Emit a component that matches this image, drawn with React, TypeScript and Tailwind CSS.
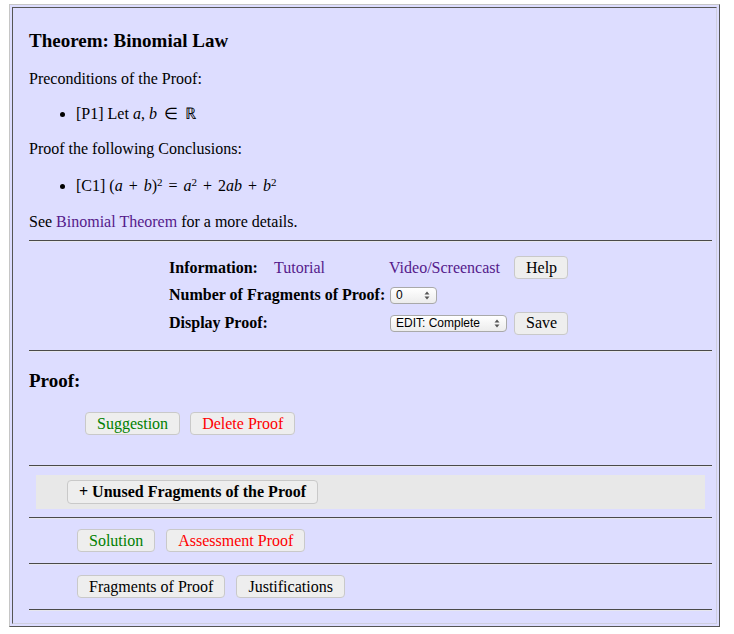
import React from "react";

const serif = "font-['Liberation_Serif',serif]";

function Btn({ children, className = "" }: { children: React.ReactNode; className?: string }) {
  return (
    <button
      className={`h-[23px] px-[11px] rounded-[4px] border border-[#c9c9c9] bg-[#eeeeee] text-[16px] leading-[20px] ${className}`}
    >
      {children}
    </button>
  );
}

function Select({ label, width }: { label: string; width: string }) {
  return (
    <div
      className={`${width} h-[17px] flex items-center justify-between pl-[5px] pr-[6px] rounded-[4px] border border-[#a9a9a9] bg-gradient-to-b from-white to-[#ececec] font-['Liberation_Sans',sans-serif] text-[12px] text-black`}
    >
      <span>{label}</span>
      <svg width="6" height="9" viewBox="0 0 6 9">
        <path d="M3 0.5 L5.5 3.5 H0.5 Z" fill="#555" />
        <path d="M3 8.5 L5.5 5.5 H0.5 Z" fill="#555" />
      </svg>
    </div>
  );
}

function Rule() {
  return <div className="h-[2px] border-t border-[#4a4a4a] border-b border-b-[#e6e6ee]" />;
}

export default function App() {
  return (
    <div className={`min-h-screen bg-white pt-[4px] pl-[9px] text-black ${serif}`}>
      <div className="w-[711px] border border-t-[#c6c6c6] border-l-[#c6c6c6] border-r-[#555] border-b-[#555] bg-[#ddddff] p-[2px]">
        <div className="border border-t-[#555] border-l-[#555] border-r-[#cfcfdf] border-b-[#cfcfdf] pl-[16px] pr-[4px] pt-[22px] pb-[12px] text-[16px] leading-[18px]">
          <h3 className="text-[19px] leading-[22px] font-bold">Theorem: Binomial Law</h3>
          <p className="mt-[18px]">Preconditions of the Proof:</p>
          <ul className="list-disc pl-[47px] mt-[17px]">
            <li>
              [P1] Let <i>a</i>, <i>b</i> <span className="mx-[3px]">∈</span> ℝ
            </li>
          </ul>
          <p className="mt-[17px]">Proof the following Conclusions:</p>
          <ul className="list-disc pl-[47px] mt-[19px]">
            <li>
              [C1] (<i>a</i> <span className="mx-[2px]">+</span> <i>b</i>)<sup className="text-[11px]">2</sup>
              <span className="mx-[6px]">=</span>
              <i>a</i><sup className="text-[11px]">2</sup> <span className="mx-[2px]">+</span> 2<i>ab</i>{" "}
              <span className="mx-[2px]">+</span> <i>b</i><sup className="text-[11px]">2</sup>
            </li>
          </ul>
          <p className="mt-[18px]">
            See <span className="text-[#551a8b]">Binomial Theorem</span> for a more details.
          </p>

          <div className="mt-[9px]">
            <Rule />
          </div>

          <div className="pl-[140px] pt-[12px] pb-[13px]">
            <div className="grid grid-cols-[105px_115px_125px_auto] items-center font-bold w-max">
              <div className="h-[27px] flex items-center">Information:</div>
              <div className="font-normal text-[#551a8b]">Tutorial</div>
              <div className="font-normal text-[#551a8b]">Video/Screencast</div>
              <div className="font-normal">
                <Btn className="w-[54px] px-0">Help</Btn>
              </div>

              <div className="col-span-2 h-[28px] flex items-center">Number of Fragments of Proof:</div>
              <div className="col-span-2 font-normal pl-[1px]">
                <Select label="0" width="w-[47px]" />
              </div>

              <div className="col-span-2 h-[28px] flex items-center">Display Proof:</div>
              <div className="font-normal pl-[1px]">
                <Select label="EDIT: Complete" width="w-[117px]" />
              </div>
              <div className="font-normal">
                <Btn className="w-[54px] px-0">Save</Btn>
              </div>
            </div>
          </div>

          <Rule />

          <h3 className="mt-[18px] text-[19px] leading-[22px] font-bold">Proof:</h3>
          <div className="flex gap-[10px] pl-[56px] mt-[20px]">
            <Btn className="text-[#008000]">Suggestion</Btn>
            <Btn className="text-[#ff0000]">Delete Proof</Btn>
          </div>

          <div className="mt-[30px]">
            <Rule />
          </div>

          <div className="mx-[7px] mt-[8px] bg-[#e8e8e8] h-[34px] flex items-center pl-[31px]">
            <Btn className="h-[24px] font-bold">+ Unused Fragments of the Proof</Btn>
          </div>

          <div className="mt-[8px]">
            <Rule />
          </div>
          <div className="flex gap-[11px] pl-[48px] pt-[10px] pb-[11px]">
            <Btn className="text-[#008000]">Solution</Btn>
            <Btn className="text-[#ff0000]">Assessment Proof</Btn>
          </div>
          <Rule />
          <div className="flex gap-[11px] pl-[48px] pt-[10px] pb-[11px]">
            <Btn>Fragments of Proof</Btn>
            <Btn>Justifications</Btn>
          </div>
          <Rule />
        </div>
      </div>
    </div>
  );
}
